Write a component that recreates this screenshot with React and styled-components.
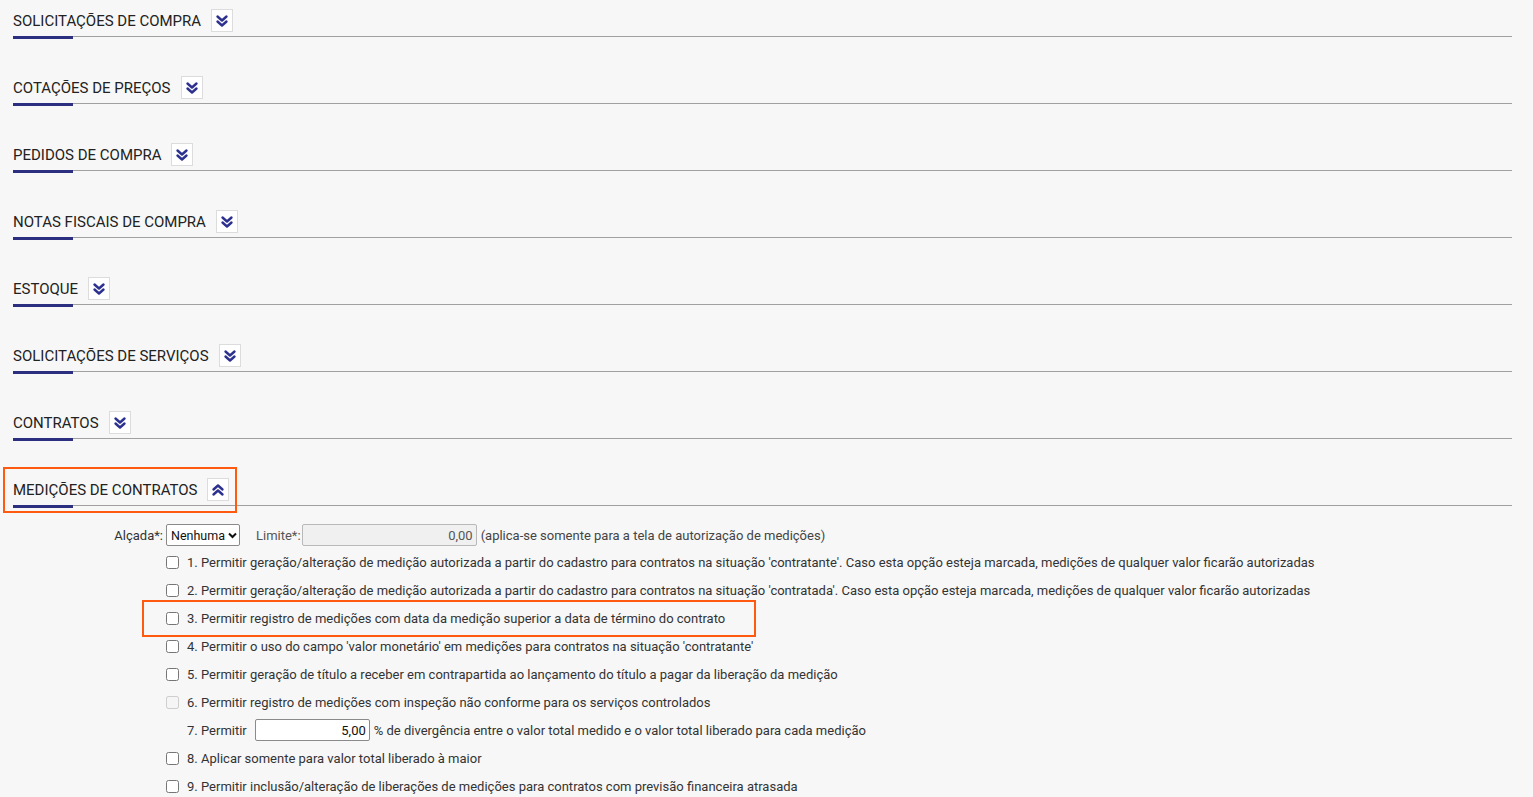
import React from 'react'
import styled, { createGlobalStyle } from 'styled-components'

const GlobalStyle = createGlobalStyle`
  html, body {
    margin: 0;
    padding: 0;
    background: #f7f7f7;
    font-family: Roboto, "Liberation Sans", Arial, sans-serif;
  }
`

const Page = styled.div`
  padding: 9px 21px 0 13px;
  box-sizing: border-box;
`

const Section = styled.section`
  margin-bottom: 39px;

  &:last-child {
    margin-bottom: 0;
  }
`

const Header = styled.div`
  position: relative;
  display: flex;
  align-items: center;
  height: 28px;
  padding-bottom: 4px;
  box-sizing: border-box;
  border-bottom: 1px solid #a0a0a0;

  &::after {
    content: '';
    position: absolute;
    left: 0;
    bottom: -3px;
    width: 60px;
    height: 3px;
    background: #2c2f80;
  }
`

const Title = styled.h2`
  margin: 0;
  font-size: 15px;
  font-weight: 400;
  color: #222;
  text-transform: uppercase;
`

const Toggle = styled.button`
  display: flex;
  align-items: center;
  justify-content: center;
  width: 22px;
  height: 23px;
  margin-left: 10px;
  padding: 0;
  background: #fff;
  border: 1px solid #dcdcdc;
  cursor: pointer;
`

const Highlight = styled.div`
  position: absolute;
  box-sizing: border-box;
  border: 2px solid #ff5a10;
  pointer-events: none;
  left: ${p => p.$left}px;
  top: ${p => p.$top}px;
  width: ${p => p.$width}px;
  height: ${p => p.$height}px;
`

const Body = styled.div`
  padding: 16px 0 0 153px;
  font-size: 13px;
  color: #333;
`

const LimitRow = styled.div`
  display: flex;
  align-items: center;
  height: 26px;
  margin-left: -153px;
`

const Label = styled.label`
  width: 150px;
  text-align: right;
  margin-right: 3px;
`

const SelectWrap = styled.div`
  position: relative;
  display: flex;

  svg {
    position: absolute;
    right: 3px;
    top: 8px;
    pointer-events: none;
  }
`

const Select = styled.select`
  appearance: none;
  height: 22px;
  width: 74px;
  font-family: inherit;
  font-size: 12.5px;
  color: #111;
  border: 1px solid #8a8a8a;
  border-radius: 2px;
  background: #fff;
  padding: 0 12px 0 4px;
`

const InlineLabel = styled.span`
  margin: 0 1px 0 16px;
  color: #555;
`

const NumberInput = styled.input`
  box-sizing: border-box;
  height: 22px;
  width: ${p => p.$width}px;
  font-family: inherit;
  font-size: 13px;
  text-align: right;
  padding: 0 3px;
  border: 1px solid ${p => (p.disabled ? '#b9b9b9' : '#8a8a8a')};
  border-radius: 2px;
  background: ${p => (p.disabled ? '#f0f0f0' : '#fff')};
  color: ${p => (p.disabled ? '#555' : '#111')};
  margin: 0 4px 0 ${p => p.$gap || 0}px;
`

const Hint = styled.span`
  color: #444;
`

const Option = styled.div`
  position: relative;
  display: flex;
  align-items: center;
  height: 28px;
`

const Check = styled.input`
  width: 13px;
  height: 13px;
  margin: 0 8px 0 0;
`

const Text = styled.span`
  padding-left: ${p => (p.$indent ? 21 : 0)}px;
  white-space: nowrap;
`

function DoubleChevron({ up }) {
  return (
    <svg width="14" height="14" viewBox="0 0 14 14" fill="none"
      stroke="#2c3190" strokeWidth="2.4" strokeLinecap="round" strokeLinejoin="round"
      style={{ transform: up ? 'rotate(180deg)' : 'none' }}>
      <polyline points="2.5,2.5 7,6.5 11.5,2.5" />
      <polyline points="2.5,7.5 7,11.5 11.5,7.5" />
    </svg>
  )
}

const sections = [
  'Solicitações de compra',
  'Cotações de preços',
  'Pedidos de compra',
  'Notas fiscais de compra',
  'Estoque',
  'Solicitações de serviços',
  'Contratos',
]

const options = [
  { n: 1, text: "Permitir geração/alteração de medição autorizada a partir do cadastro para contratos na situação 'contratante'. Caso esta opção esteja marcada, medições de qualquer valor ficarão autorizadas" },
  { n: 2, text: "Permitir geração/alteração de medição autorizada a partir do cadastro para contratos na situação 'contratada'. Caso esta opção esteja marcada, medições de qualquer valor ficarão autorizadas" },
  { n: 3, text: 'Permitir registro de medições com data da medição superior a data de término do contrato', highlight: true },
  { n: 4, text: "Permitir o uso do campo 'valor monetário' em medições para contratos na situação 'contratante'" },
  { n: 5, text: 'Permitir geração de título a receber em contrapartida ao lançamento do título a pagar da liberação da medição' },
  { n: 6, text: 'Permitir registro de medições com inspeção não conforme para os serviços controlados', disabled: true },
  { n: 7, percent: true },
  { n: 8, text: 'Aplicar somente para valor total liberado à maior' },
  { n: 9, text: 'Permitir inclusão/alteração de liberações de medições para contratos com previsão financeira atrasada' },
]

export default function App() {
  return (
    <>
      <GlobalStyle />
      <Page>
        {sections.map(s => (
          <Section key={s}>
            <Header>
              <Title>{s}</Title>
              <Toggle><DoubleChevron /></Toggle>
            </Header>
          </Section>
        ))}
        <Section>
          <Header>
            <Title>Medições de contratos</Title>
            <Toggle><DoubleChevron up /></Toggle>
            <Highlight $left={-10} $top={-11} $width={234} $height={46} />
          </Header>
          <Body>
            <LimitRow>
              <Label>Alçada*:</Label>
              <SelectWrap>
                <Select defaultValue="Nenhuma">
                  <option>Nenhuma</option>
                </Select>
                <svg width="9" height="7" viewBox="0 0 9 7" fill="none" stroke="#111" strokeWidth="2">
                  <polyline points="1,1.5 4.5,5 8,1.5" />
                </svg>
              </SelectWrap>
              <InlineLabel>Limite*:</InlineLabel>
              <NumberInput $width={175} disabled defaultValue="0,00" />
              <Hint>(aplica-se somente para a tela de autorização de medições)</Hint>
            </LimitRow>
            {options.map(o =>
              o.percent ? (
                <Option key={o.n}>
                  <Text $indent>{o.n}. Permitir</Text>
                  <NumberInput $width={115} $gap={8} defaultValue="5,00" />
                  <Text>% de divergência entre o valor total medido e o valor total liberado para cada medição</Text>
                </Option>
              ) : (
                <Option key={o.n}>
                  <Check type="checkbox" disabled={o.disabled} />
                  <Text>{o.n}. {o.text}</Text>
                  {o.highlight && <Highlight $left={-24} $top={-4} $width={614} $height={37} />}
                </Option>
              )
            )}
          </Body>
        </Section>
      </Page>
    </>
  )
}
